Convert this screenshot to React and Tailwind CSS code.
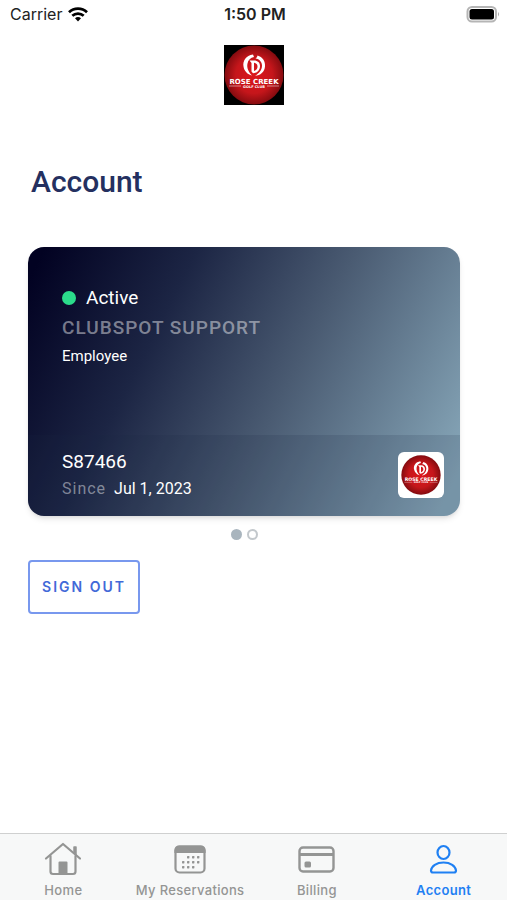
import React from 'react';

function ClubLogo({ id, className, square }) {
  return (
    <svg viewBox="0 0 60 60" className={className} role="img" aria-label="Rose Creek Golf Club">
      <defs>
        <radialGradient id={id} cx="50%" cy="50%" r="52%">
          <stop offset="0%" stopColor="#dc161c" />
          <stop offset="60%" stopColor="#c5161b" />
          <stop offset="100%" stopColor="#7d0a0e" />
        </radialGradient>
      </defs>
      {square && <rect width="60" height="60" fill="#000" />}
      <circle cx="30" cy="30" r="29.5" fill={`url(#${id})`} />
      <path
        d="M29 9.500C22 10.500 18.500 16 19.500 21.500C20.200 26 23.500 29.500 28 30.500C24.500 27 22.500 22.500 23.500 18.500C24.200 15 26.500 12.800 30 12L29 9.500Z"
        fill="#fff"
      />
      <path
        d="M33.500 10.500C38.500 12 41.500 16 41 21.500C40.500 27 36.500 30.500 31 30.800C35 28.500 38 25 38 20.500C38 17 35.500 14 31.500 13.500C32.500 12.800 33.300 11.800 33.500 10.500Z"
        fill="#fff"
      />
      <path
        d="M25.500 15.500H30C34 15.500 36.200 18 36 21.500C35.800 25.500 33 28 29 28.300L27.500 26.500V18L25.500 15.500ZM30 17.800V26C32.500 25.200 33.500 23.500 33.500 21.500C33.500 19.500 32.300 18 30 17.800Z"
        fill="#fff"
        fillRule="evenodd"
      />
      <text x="30" y="38.500" textAnchor="middle" fontSize="7" fontWeight="700" fontFamily="DejaVu Sans, sans-serif" fill="#fff">
        ROSE CREEK
      </text>
      <text x="30" y="42.500" textAnchor="middle" fontSize="3.500" fontWeight="700" fontFamily="DejaVu Sans, sans-serif" fill="#fff">
        GOLF CLUB
      </text>
      <path d="M5 41H17M43 41H55" stroke="#fff" strokeOpacity="0.7" strokeWidth="0.7" />
    </svg>
  );
}

function HomeIcon() {
  return (
    <svg viewBox="0 0 38 36" className="h-9 w-[38px]" fill="none" stroke="currentColor" strokeWidth="2.200" strokeLinecap="round" strokeLinejoin="round">
      <path d="M2 17.500L19 3L36 17.500" />
      <path d="M6.500 15V30.500Q6.500 33 9 33H29Q31.500 33 31.500 30.500V15" />
      <path d="M30 6H32V13.500L30 11.800Z" fill="currentColor" strokeWidth="1.500" />
      <path d="M15.500 21.500H22.500V33H15.500Z" fill="currentColor" strokeWidth="2" />
    </svg>
  );
}

function CalendarIcon() {
  const dots = [
    [17, 15], [22, 15], [27, 15],
    [12, 20], [17, 20], [22, 20], [27, 20],
    [12, 25], [17, 25], [22, 25],
  ];
  return (
    <svg viewBox="0 0 38 36" className="h-9 w-[38px]" fill="none" stroke="currentColor" strokeWidth="2.200">
      <rect x="4.500" y="5.500" width="29" height="26" rx="4" />
      <path d="M4.500 11V9.500Q4.500 5.500 8.500 5.500H29.500Q33.500 5.500 33.500 9.500V11Z" fill="currentColor" />
      {dots.map(([x, y]) => (
        <rect key={`${x}-${y}`} x={x - 1} y={y} width="2.400" height="2.400" rx="0.600" fill="currentColor" stroke="none" />
      ))}
    </svg>
  );
}

function CardIcon() {
  return (
    <svg viewBox="0 0 38 36" className="h-9 w-[38px]" fill="none" stroke="currentColor" strokeWidth="2.400">
      <rect x="1.500" y="6.500" width="34" height="24" rx="3.500" />
      <path d="M1.500 13.500H35.500" strokeWidth="2.800" />
      <rect x="6.500" y="20.500" width="6.500" height="6" rx="1.500" fill="currentColor" stroke="none" />
    </svg>
  );
}

function PersonIcon() {
  return (
    <svg viewBox="0 0 38 36" className="h-9 w-[38px]" fill="none" stroke="currentColor" strokeWidth="2.200" strokeLinejoin="round">
      <ellipse cx="18.500" cy="11.500" rx="6" ry="6.500" />
      <path d="M8 31.500C6.500 31.500 6 30.800 6 29.500C6.500 25 11.500 21.500 18.500 21.500S30.500 25 31 29.500C31 30.800 30.500 31.500 29 31.500Z" />
    </svg>
  );
}

const tabs = [
  { label: 'Home', Icon: HomeIcon },
  { label: 'My Reservations', Icon: CalendarIcon },
  { label: 'Billing', Icon: CardIcon },
  { label: 'Account', Icon: PersonIcon, active: true },
];

function StatusBar() {
  return (
    <div className="grid h-7 grid-cols-3 items-center pr-[7px] pl-[10px] font-[Inter,sans-serif] text-base text-[#222]">
      <div className="flex items-center gap-[6px]">
        <span>Carrier</span>
        <svg viewBox="0 0 20 15" className="h-[15px] w-5" fill="none" stroke="#000" strokeWidth="2.700">
          <path d="M1 5.300C6 0.400 14 0.400 19 5.300" />
          <path d="M4.300 8.800C7.500 5.800 12.500 5.800 15.700 8.800" />
          <path d="M7 11.200C8.700 9.700 11.300 9.700 13 11.200L10 14.500Z" fill="#000" stroke="none" />
        </svg>
      </div>
      <span className="text-center font-semibold">1:50 PM</span>
      <svg viewBox="0 0 34 17" className="h-[17px] w-[34px] justify-self-end">
        <rect x="1.500" y="1" width="28.500" height="14.500" rx="4.500" fill="#fff" stroke="#b5b5b5" strokeWidth="2" />
        <rect x="3.500" y="3" width="24.500" height="10.500" rx="2.500" fill="#000" />
        <path d="M32 6Q34 8.200 32 10.500Z" fill="#aaa" />
      </svg>
    </div>
  );
}

function MemberCard() {
  return (
    <section className="overflow-hidden rounded-2xl bg-linear-[117deg,#020222_3%,#1c2544_30%,#4a5b72_58%,#87a7b9_96%] text-white shadow-md">
      <div className="flex h-[188px] flex-col px-[34px] pt-[38px]">
        <div className="flex items-center gap-[10px] text-[19px] leading-[26px]">
          <span className="size-[14px] rounded-full bg-[#2bdc8b]" />
          <span>Active</span>
        </div>
        <div className="pt-1 text-[19px] leading-[26px] font-medium tracking-[1px] text-white/45">CLUBSPOT SUPPORT</div>
        <div className="pt-[3px] text-[15px] leading-6">Employee</div>
      </div>
      <div className="flex items-center justify-between bg-[#1e2a44]/15 pt-[15px] pr-4 pb-4 pl-[34px]">
        <div>
          <div className="text-[19px] leading-6">S87466</div>
          <div className="flex items-baseline gap-2 pt-1 leading-[22px]">
            <span className="tracking-[1px] text-white/45">Since</span>
            <span>Jul 1, 2023</span>
          </div>
        </div>
        <div className="rounded-md bg-white p-[3px]">
          <ClubLogo id="card-logo" className="size-10" />
        </div>
      </div>
    </section>
  );
}

export default function App() {
  return (
    <div className="flex min-h-screen flex-col bg-white font-[Roboto,sans-serif]">
      <StatusBar />
      <header className="flex justify-center pt-[17px]">
        <ClubLogo id="header-logo" className="size-[60px]" square />
      </header>

      <main className="flex-1 pr-[47px] pl-7">
        <h1 className="pt-[57px] pl-[3px] text-3xl leading-10 font-medium text-[#243060]">Account</h1>
        <div className="pt-[45px]">
          <MemberCard />
        </div>
        <div className="flex justify-center gap-[5px] pt-[13px]">
          <button type="button" aria-label="Card 1" className="size-[11px] rounded-full bg-[#a9b5be]" />
          <button type="button" aria-label="Card 2" className="size-[11px] rounded-full border-2 border-[#c3c8cc]" />
        </div>
        <button
          type="button"
          className="mt-5 h-[54px] w-28 rounded border-2 border-[#7898ee] font-[Inter,sans-serif] text-sm font-semibold tracking-[2px] text-[#4269d8]"
        >
          SIGN OUT
        </button>
      </main>

      <nav className="grid grid-cols-4 border-t border-[#cfd0d0] bg-[#f7f8f8] pt-[7px] font-[Inter,sans-serif] text-[13px] font-medium tracking-wide">
        {tabs.map(({ label, Icon, active }) => (
          <a
            key={label}
            href="#"
            aria-current={active ? 'page' : undefined}
            className={`flex flex-col items-center whitespace-nowrap ${active ? 'font-semibold text-[#1f80f3]' : 'text-[#949594]'}`}
          >
            <Icon />
            <span className="pt-[3px] leading-5">{label}</span>
          </a>
        ))}
      </nav>
    </div>
  );
}
